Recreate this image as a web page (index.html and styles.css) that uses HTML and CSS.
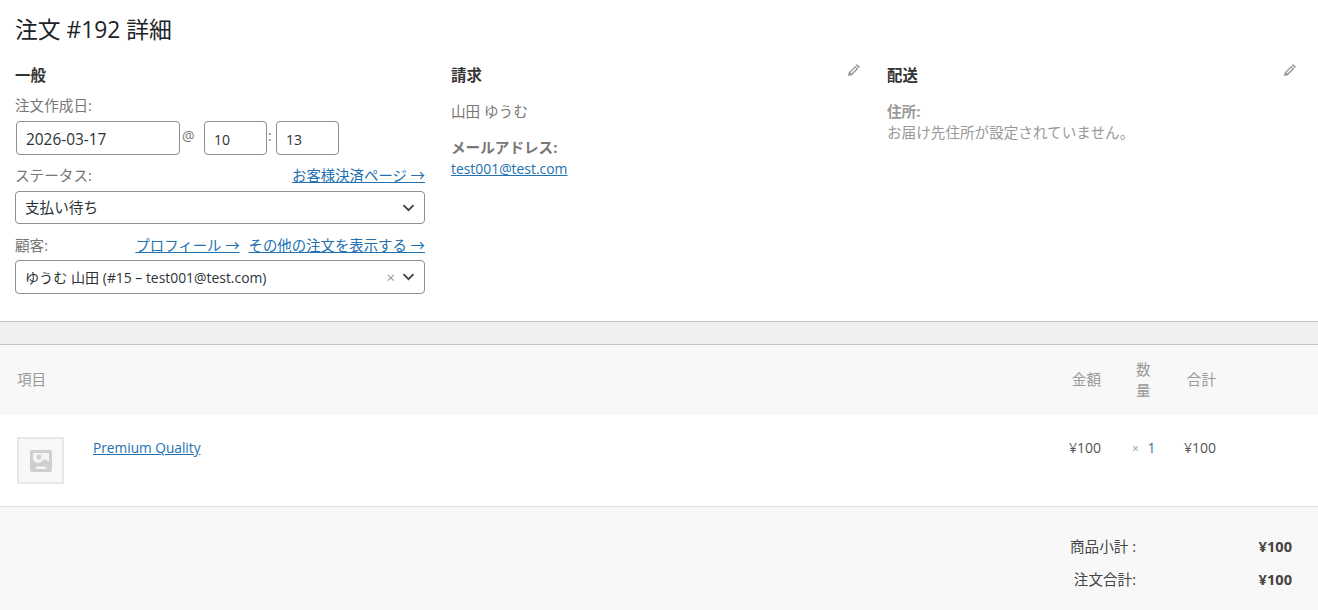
FILE: index.html
```html
<!DOCTYPE html>
<html lang="ja">
<head>
<meta charset="utf-8">
<title>注文 #192 詳細</title>
<link rel="stylesheet" href="styles.css">
</head>
<body>
<section class="order-data">
  <h2 class="order-title">注文 #192 詳細</h2>
  <div class="columns">
    <div class="col">
      <h3 class="col-head">一般</h3>
      <div class="field-label date-label">注文作成日:</div>
      <div class="date-row">
        <input class="txt date" type="text" value="2026-03-17">
        <span class="at">@</span>
        <input class="txt hour" type="text" value="10">
        <span class="colon">:</span>
        <input class="txt minute" type="text" value="13">
      </div>
      <div class="label-row status-label">
        <span class="field-label">ステータス:</span>
        <a class="link" href="#">お客様決済ページ →</a>
      </div>
      <div class="select status">
        <span>支払い待ち</span>
        <svg class="chev" viewBox="0 0 12 8"><path d="M1 1.2l5 5 5-5"/></svg>
      </div>
      <div class="label-row customer-label">
        <span class="field-label">顧客:</span>
        <span class="links">
          <a class="link" href="#">プロフィール →</a>
          <a class="link" href="#">その他の注文を表示する →</a>
        </span>
      </div>
      <div class="select customer">
        <span class="customer-name">ゆうむ 山田 <span class="latin">(#15 – test001@test.com)</span></span>
        <span class="clear">×</span>
        <svg class="chev" viewBox="0 0 12 8"><path d="M1 1.2l5 5 5-5"/></svg>
      </div>
    </div>
    <div class="col">
      <div class="head-row">
        <h3 class="col-head">請求</h3>
        <svg class="pencil" viewBox="0 0 12 12"><path d="M9 0l3 3-1.2 1.2-3-3zM7.1 1.9l3 3L3.6 11.400 0 12l.6-3.600zM7.300 3.700L2.400 8.600l1 1 4.900-4.900z" fill-rule="evenodd"/></svg>
      </div>
      <p class="addr-name">山田 ゆうむ</p>
      <p class="addr-key">メールアドレス:</p>
      <a class="link latin" href="#">test001@test.com</a>
    </div>
    <div class="col muted">
      <div class="head-row">
        <h3 class="col-head">配送</h3>
        <svg class="pencil" viewBox="0 0 12 12"><path d="M9 0l3 3-1.2 1.2-3-3zM7.1 1.9l3 3L3.6 11.400 0 12l.6-3.600zM7.300 3.700L2.400 8.600l1 1 4.900-4.900z" fill-rule="evenodd"/></svg>
      </div>
      <p class="ship-key">住所:</p>
      <p class="ship-val">お届け先住所が設定されていません。</p>
    </div>
  </div>
</section>
<div class="band"></div>
<table class="items">
  <colgroup>
    <col class="c-thumb"><col><col class="c-cost"><col class="c-qty"><col class="c-total"><col class="c-end">
  </colgroup>
  <thead>
    <tr>
      <th class="h-item" colspan="2">項目</th>
      <th class="h-num">金額</th>
      <th class="h-qty"><span>数量</span></th>
      <th class="h-num">合計</th>
      <th></th>
    </tr>
  </thead>
  <tbody>
    <tr>
      <td class="d-thumb">
        <div class="thumb">
          <svg viewBox="0 0 22 22"><rect width="22" height="22" rx="2" fill="#cfcfcf"/><rect x="3" y="3" width="16" height="16" fill="#f4f4f4"/><circle cx="9" cy="7" r="2.4" fill="#cfcfcf"/><path d="M3 10l4 3 4-1 4-3 4 3v7H3z" fill="#cfcfcf"/><path d="M5 19l3-3 3 1 3-1 3 3z" fill="#f4f4f4"/></svg>
        </div>
      </td>
      <td class="d-name"><a class="link product" href="#">Premium Quality</a></td>
      <td class="d-num">¥100</td>
      <td class="d-qty"><small>×</small> <span>1</span></td>
      <td class="d-num">¥100</td>
      <td></td>
    </tr>
  </tbody>
</table>
<div class="totals">
  <div class="t-label">商品小計 :</div><div class="t-val">¥100</div>
  <div class="t-label">注文合計:</div><div class="t-val">¥100</div>
</div>
</body>
</html>
```

FILE: styles.css
```css
* { box-sizing: border-box; }
html, body { height: 100%; }
body {
  margin: 0;
  background: #f8f8f8;
  color: #444;
  font: 14.6px/21px "Open Sans", "Noto Sans CJK JP", sans-serif;
  overflow: hidden;
}
p { margin: 0; }
.link { color: #2271b1; text-decoration: underline; font-size: 14.4px; }
.latin, .link.latin { font-size: 13.9px; }
.link.product { font-size: 13.7px; }

.order-data {
  height: 322px;
  padding: 15px 21px 0 15px;
  background: #fff;
  border-bottom: 1px solid #c3c4c7;
}
.order-title {
  margin: 0;
  height: 31px;
  font-size: 22.8px;
  line-height: 30px;
  font-weight: 400;
  color: #1d2327;
}
.columns { display: grid; grid-template-columns: repeat(3, 410px); column-gap: 26px; margin-top: 13px; }
.col-head { margin: 0; font-size: 15.4px; line-height: 34px; height: 32px; font-weight: 700; color: #333; }
.head-row { display: flex; justify-content: space-between; align-items: flex-start; }
.pencil { width: 12px; height: 12px; margin: 5px 1px 0 0; fill: #999; }

.field-label { color: #777; }
.date-label { margin-top: 4px; line-height: 21px; }
.date-row { display: flex; align-items: flex-start; margin-top: 5px; padding-left: 1px; height: 34px; }
.txt {
  height: 34px;
  padding: 2px 9px 0;
  border: 1px solid #8c8f94;
  border-radius: 4px;
  background: #fff;
  color: #2c3338;
  font: inherit;
  font-size: 14px;
  outline: none;
}
.date { width: 164px; font-size: 15.4px; }
.hour, .minute { width: 63px; }
.at { width: 24px; padding-left: 2px; color: #777; font-size: 14px; line-height: 30px; }
.colon { width: 9px; padding-left: 1px; color: #777; font-size: 14px; line-height: 30px; }

.label-row { display: flex; justify-content: space-between; align-items: baseline; line-height: 21px; }
.status-label { margin-top: 10px; }
.customer-label { margin-top: 11px; }
.links { display: flex; gap: 9px; }
.select {
  display: flex;
  align-items: center;
  margin-top: 5px;
  padding: 0 9px;
  border: 1px solid #8c8f94;
  border-radius: 4px;
  background: #fff;
  color: #2c3338;
}
.status { height: 33px; }
.customer { height: 34px; margin-top: 4px; }
.select > span:first-child { flex: 1; }
.customer-name { font-size: 14.1px; }
.clear { margin-right: 7px; color: #999; font-size: 15px; }
.chev { width: 13px; height: 8px; fill: none; stroke: #3c434a; stroke-width: 1.8; }

.addr-name { margin-top: 10px; color: #777; }
.addr-key { margin-top: 14px; line-height: 22px; color: #777; font-weight: 700; }
.muted .ship-key { margin-top: 10px; color: #999; font-weight: 700; }
.ship-val { color: #999; }

.band { height: 23px; background: #f0f0f1; border-bottom: 1px solid #c3c4c7; }

.items { width: 100%; table-layout: fixed; border-collapse: collapse; }
.c-thumb { width: 93px; }
.c-cost { width: 90px; }
.c-qty { width: 69px; }
.c-total { width: 46px; }
.c-end { width: 102px; }
thead tr { height: 70px; background: #f8f8f8; }
th { padding: 0 0 2px; font-weight: 400; color: #999; text-align: left; vertical-align: middle; }
.h-item { padding-left: 17px; }
.h-num { text-align: right; }
.h-qty { padding: 0 0 0 35px; }
.h-qty span { display: block; width: 16px; line-height: 21px; }
tbody tr { height: 91px; background: #fff; border-bottom: 1px solid #dfdfdf; }
td { padding: 22px 0 0; vertical-align: top; color: #555; font-size: 14px; }
.d-thumb { padding-left: 17px; }
.thumb {
  display: flex;
  align-items: center;
  justify-content: center;
  width: 47px;
  height: 47px;
  background: #f8f8f8;
  border: 2px solid #e8e8e8;
}
.thumb svg { width: 22px; height: 22px; }
.d-num { text-align: right; white-space: nowrap; }
.d-qty { padding-left: 31px; white-space: nowrap; color: #3f6b94; }
.d-qty small { font-size: 12px; color: #999; margin-right: 5px; }

.totals {
  display: grid;
  grid-template-columns: auto 156px;
  grid-auto-rows: 33px;
  justify-content: end;
  align-items: center;
  padding: 23px 26px 0 0;
  color: #444;
}
.t-label { text-align: right; }
.t-val { text-align: right; font-weight: 700; }
```
